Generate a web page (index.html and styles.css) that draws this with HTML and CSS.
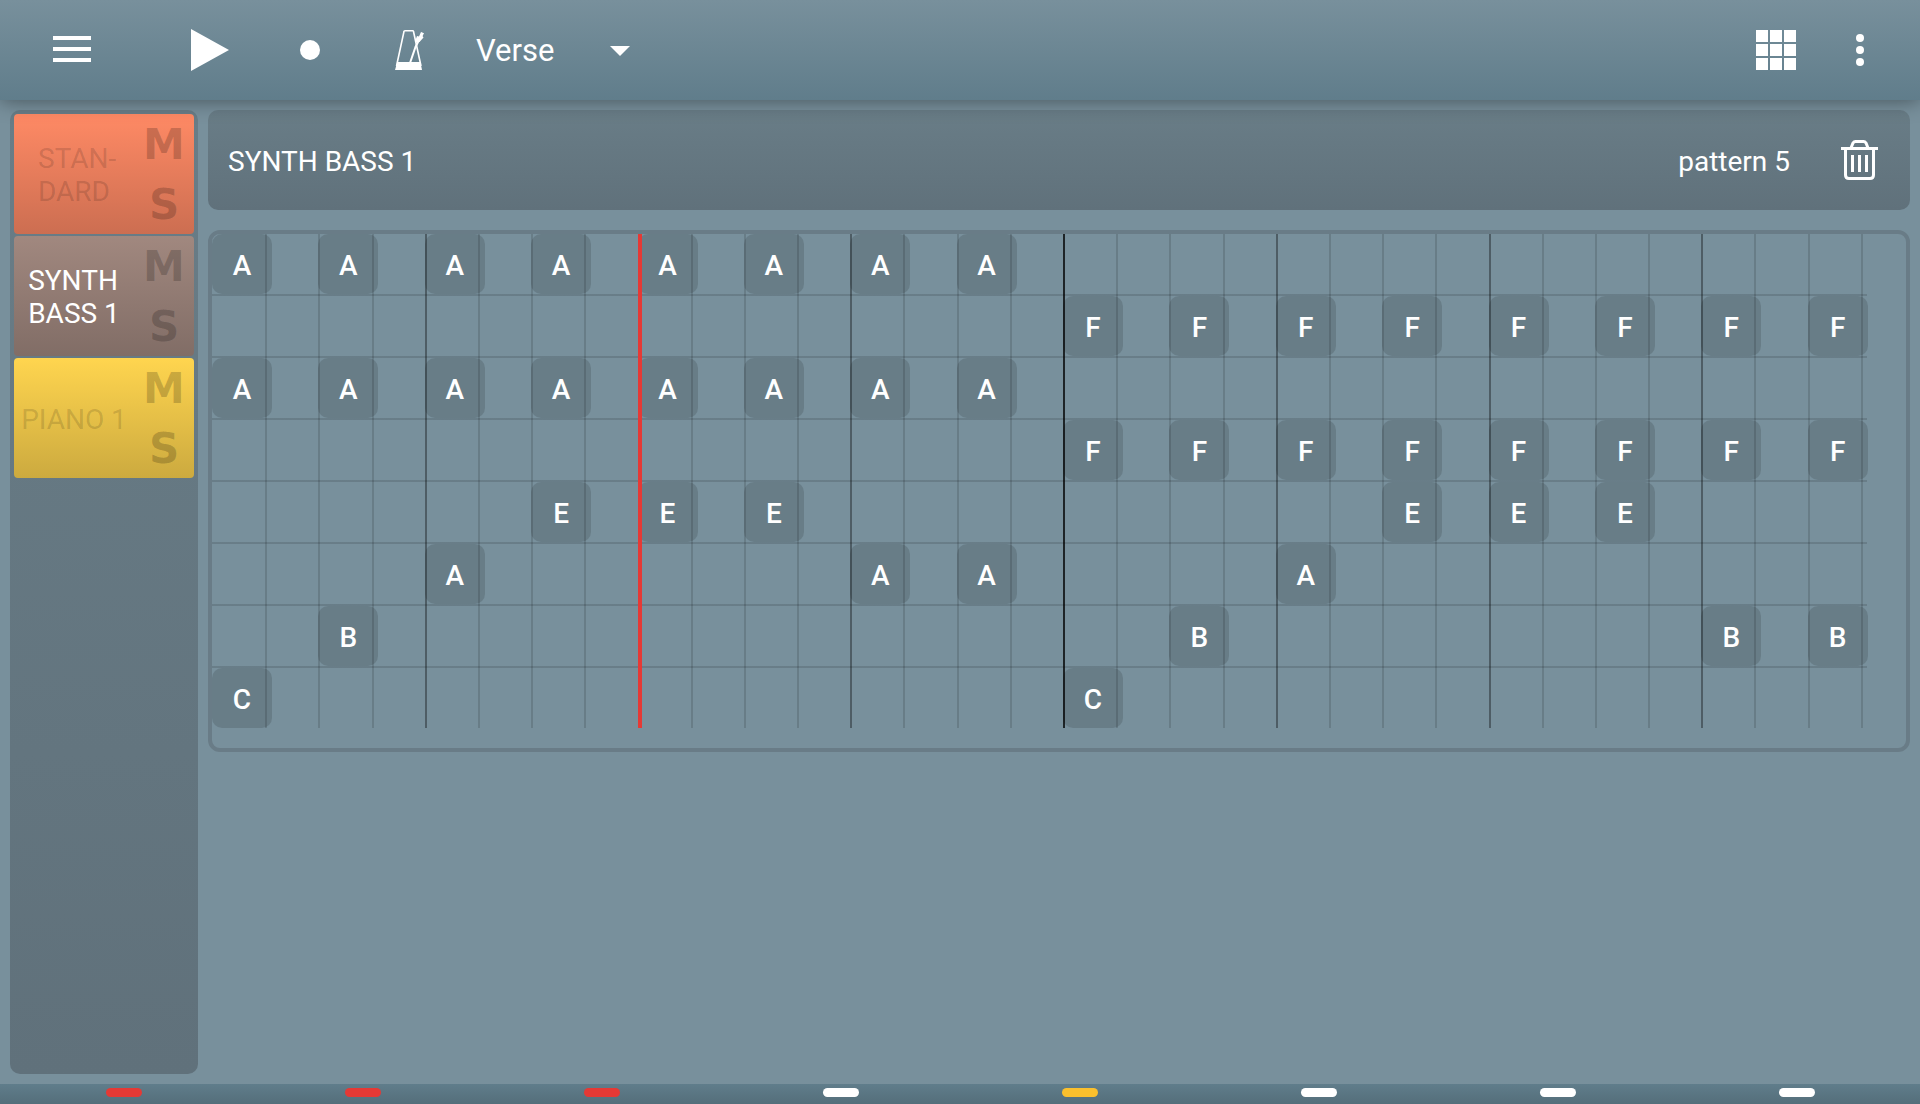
FILE: index.html
```html
<!DOCTYPE html>
<html lang="en">
<head>
<meta charset="utf-8">
<meta name="viewport" content="width=device-width, initial-scale=1">
<title>Song editor</title>
<link rel="stylesheet" href="styles.css">
</head>
<body>
<header class="toolbar">
  <button class="tool tool-menu" type="button" aria-label="Menu">
    <svg width="38" height="28" viewBox="0 0 38 28"><path d="M0 0h38v4H0zM0 11h38v4H0zM0 22h38v4H0z"/></svg>
  </button>
  <button class="tool" type="button" aria-label="Play">
    <svg width="38" height="42" viewBox="0 0 38 42"><path d="M0 0l38 21L0 42z"/></svg>
  </button>
  <button class="tool" type="button" aria-label="Record">
    <svg width="20" height="20" viewBox="0 0 20 20"><circle cx="10" cy="10" r="10"/></svg>
  </button>
  <button class="tool" type="button" aria-label="Metronome">
    <svg width="30" height="40" viewBox="0 0 30 40"><path class="line thin" d="M1.500 36L9 1.500Q9 .8 10 .8H17.500Q18.400 .8 18.500 1.500L26 36"/><path d="M2.300 32H25.400L27 40H0z"/><path class="line" stroke-width="2" d="M15 33L20.500 17L27.500 3"/><path d="M26 2L29 3.200L27.500 6L28.500 7.500L24.500 12L21 12.500L20.500 10L22 6L24 6.500z"/></svg>
  </button>
  <div class="part">
    <select class="part-select" aria-label="Song part">
      <option>Verse</option>
    </select>
    <svg class="part-arrow" width="20" height="10" viewBox="0 0 20 10"><path d="M0 0h20L10 10z"/></svg>
  </div>
  <div class="toolbar-end">
    <button class="tool tool-grid" type="button" aria-label="Patterns">
      <svg width="40" height="40" viewBox="0 0 40 40"><path d="M0 0h12v12H0zM14 0h12v12H14zM28 0h12v12H28zM0 14h12v12H0zM14 14h12v12H14zM28 14h12v12H28zM0 28h12v12H0zM14 28h12v12H14zM28 28h12v12H28z"/></svg>
    </button>
    <button class="tool tool-more" type="button" aria-label="More options">
      <svg width="8" height="32" viewBox="0 0 8 32"><circle cx="4" cy="4" r="4"/><circle cx="4" cy="16" r="4"/><circle cx="4" cy="28" r="4"/></svg>
    </button>
  </div>
</header>

<main class="workspace">
  <nav class="tracks" aria-label="Tracks">
    <div class="track track-orange">
      <button class="track-name" type="button"><span>STAN<span class="hyphen">-</span><br>DARD</span></button>
      <div class="track-switches">
        <button type="button" aria-label="Mute">M</button>
        <button type="button" aria-label="Solo">S</button>
      </div>
    </div>
    <div class="track track-brown">
      <button class="track-name selected" type="button"><span>SYNTH<br>BASS 1</span></button>
      <div class="track-switches">
        <button type="button" aria-label="Mute">M</button>
        <button type="button" aria-label="Solo">S</button>
      </div>
    </div>
    <div class="track track-yellow">
      <button class="track-name" type="button"><span>PIANO 1</span></button>
      <div class="track-switches">
        <button type="button" aria-label="Mute">M</button>
        <button type="button" aria-label="Solo">S</button>
      </div>
    </div>
  </nav>

  <section class="editor">
    <div class="pattern-bar">
      <h1>SYNTH BASS 1</h1>
      <span class="pattern-name">pattern 5</span>
      <button class="tool" type="button" aria-label="Delete pattern">
        <svg width="38" height="40" viewBox="0 0 38 40"><path class="line" stroke-width="3" d="M0 8.500h37M10 8l2-5q1-1.500 2.500-1.500h8q1.500 0 2.500 1.500l2 5M4.500 9v26q0 3.500 3.500 3.500h21q3.500 0 3.500-3.500V9M11.500 15v17M18.500 15v17M25.500 15v17"/></svg>
      </button>
    </div>

    <div class="roll-frame">
      <div class="roll">
        <div class="lane">
          <button class="note">A</button><button class="note">A</button><button class="note">A</button><button class="note">A</button><button class="note">A</button><button class="note">A</button><button class="note">A</button><button class="note">A</button>
        </div>
        <div class="lane">
          <button class="note at-9">F</button><button class="note">F</button><button class="note">F</button><button class="note">F</button><button class="note">F</button><button class="note">F</button><button class="note">F</button><button class="note">F</button>
        </div>
        <div class="lane">
          <button class="note">A</button><button class="note">A</button><button class="note">A</button><button class="note">A</button><button class="note">A</button><button class="note">A</button><button class="note">A</button><button class="note">A</button>
        </div>
        <div class="lane">
          <button class="note at-9">F</button><button class="note">F</button><button class="note">F</button><button class="note">F</button><button class="note">F</button><button class="note">F</button><button class="note">F</button><button class="note">F</button>
        </div>
        <div class="lane">
          <button class="note at-4">E</button><button class="note">E</button><button class="note">E</button><button class="note at-12">E</button><button class="note">E</button><button class="note">E</button>
        </div>
        <div class="lane">
          <button class="note at-3">A</button><button class="note at-7">A</button><button class="note">A</button><button class="note at-11">A</button>
        </div>
        <div class="lane">
          <button class="note at-2">B</button><button class="note at-10">B</button><button class="note at-15">B</button><button class="note">B</button>
        </div>
        <div class="lane">
          <button class="note">C</button><button class="note at-9">C</button>
        </div>
        <div class="steps" aria-hidden="true">
          <i></i><i></i><i></i><i></i><i></i><i></i><i></i><i></i>
          <i class="playhead"></i><i></i><i></i><i></i><i></i><i></i><i></i><i></i>
          <i></i><i></i><i></i><i></i><i></i><i></i><i></i><i></i>
          <i></i><i></i><i></i><i></i><i></i><i></i><i></i><i></i>
        </div>
      </div>
    </div>
  </section>
</main>

<footer class="beats">
  <span class="beat red"></span><span class="beat red"></span><span class="beat red"></span><span class="beat"></span><span class="beat amber"></span><span class="beat"></span><span class="beat"></span><span class="beat"></span>
</footer>
</body>
</html>
```
FILE: styles.css
```css
* {
  box-sizing: border-box;
}

body {
  margin: 0;
  min-height: 100vh;
  display: flex;
  flex-direction: column;
  background: #78909c;
  color: #fff;
  font: 28px/33px Roboto, sans-serif;
}

button {
  margin: 0;
  padding: 0;
  border: 0;
  background: none;
  color: inherit;
  font: inherit;
  cursor: pointer;
}

svg {
  display: block;
  fill: #fff;
}

.line {
  fill: none;
  stroke: #fff;
}

.thin {
  stroke-width: 1.6;
}

/* Top bar */
.toolbar {
  position: relative;
  display: flex;
  align-items: center;
  height: 100px;
  padding: 0 20px;
  background: linear-gradient(#78909c, #607d8b);
  box-shadow: 0 0 20px rgba(0, 0, 0, 0.45);
}

.tool {
  display: flex;
  align-items: center;
  justify-content: center;
  width: 100px;
  height: 100px;
}

.tool-menu {
  width: 104px;
  margin-right: 36px;
}

.part {
  display: grid;
  align-items: center;
  width: 154px;
  margin-left: 16px;
}

.part-select {
  grid-area: 1 / 1;
  height: 60px;
  margin: 0;
  padding: 2px 0 0;
  border: 0;
  appearance: none;
  background: none;
  color: #fff;
  font: 31px/38px Roboto, sans-serif;
}

.part-arrow {
  grid-area: 1 / 1;
  justify-self: end;
  margin-top: 2px;
  pointer-events: none;
}

.toolbar-end {
  display: flex;
  margin-left: auto;
}

.tool-grid {
  width: 88px;
}

.tool-more {
  width: 80px;
}

/* Body */
.workspace {
  flex: 1;
  display: flex;
  gap: 10px;
  padding: 10px;
}

.tracks {
  flex: none;
  display: flex;
  flex-direction: column;
  gap: 2px;
  width: 188px;
  padding: 4px;
  border-radius: 10px;
  background: linear-gradient(#697d87, #60717b);
}

.track {
  display: flex;
  height: 120px;
  border-radius: 4px;
}

.track-orange {
  background: linear-gradient(#ff8a65, #cc6e51);
}

.track-brown {
  background: linear-gradient(#a1887f, #816d66);
}

.track-yellow {
  background: linear-gradient(#ffd54f, #ccaa3f);
}

.track-name {
  display: flex;
  align-items: center;
  justify-content: center;
  width: 120px;
  padding-top: 2px;
  color: rgba(0, 0, 0, 0.15);
  text-align: left;
}

.track-name.selected {
  color: #fff;
}

/* The hyphen hangs outside the centred name */
.hyphen {
  margin-right: -10px;
}

.track-switches {
  display: flex;
  flex-direction: column;
  width: 60px;
  padding-top: 1px;
  color: rgba(0, 0, 0, 0.2);
  font: bold 42px/60px "DejaVu Sans", sans-serif;
}

.editor {
  flex: 1;
  min-width: 0;
  display: flex;
  flex-direction: column;
  gap: 20px;
}

.pattern-bar {
  display: flex;
  align-items: center;
  height: 100px;
  padding-left: 20px;
  border-radius: 10px;
  background: linear-gradient(#697d87, #60717b);
}

.pattern-bar h1 {
  flex: 1;
  margin: 0;
  padding-top: 2px;
  font: inherit;
}

.pattern-name {
  margin-right: 20px;
  padding-top: 2px;
}

/* Piano roll */
.roll-frame {
  padding-bottom: 20px;
  border: 4px solid #697c87;
  border-radius: 12px;
}

.roll {
  display: grid;
  grid-template-columns: minmax(0, 1fr);
  grid-template-rows: repeat(8, 60px);
  gap: 2px;
  margin-right: -8px;
}

.lane {
  display: grid;
  grid-column: 1;
  grid-template-columns: repeat(16, minmax(0, 1fr));
}

/* Divider in the gap under each lane but the last */
.lane:not(:nth-child(8)) {
  margin-bottom: -2px;
  background: linear-gradient(rgba(0, 0, 0, 0.13), rgba(0, 0, 0, 0.13)) no-repeat 0 100% / calc(100% - 47px) 2px;
}

.lane:nth-child(1) { grid-row: 1; }
.lane:nth-child(2) { grid-row: 2; }
.lane:nth-child(3) { grid-row: 3; }
.lane:nth-child(4) { grid-row: 4; }
.lane:nth-child(5) { grid-row: 5; }
.lane:nth-child(6) { grid-row: 6; }
.lane:nth-child(7) { grid-row: 7; }
.lane:nth-child(8) { grid-row: 8; }

.note {
  width: 60px;
  height: 60px;
  padding-top: 2px;
  border-radius: 10px;
  background: rgba(0, 0, 0, 0.13);
  font-weight: 500;
}

.at-2 { grid-column-start: 2; }
.at-3 { grid-column-start: 3; }
.at-4 { grid-column-start: 4; }
.at-7 { grid-column-start: 7; }
.at-9 { grid-column-start: 9; }
.at-10 { grid-column-start: 10; }
.at-11 { grid-column-start: 11; }
.at-12 { grid-column-start: 12; }
.at-15 { grid-column-start: 15; }

.steps {
  display: grid;
  grid-area: 1 / 1 / 9 / 2;
  grid-template-columns: repeat(32, minmax(0, 1fr));
  pointer-events: none;
}

.steps i {
  width: 2px;
  background: rgba(0, 0, 0, 0.13);
}

.steps i:nth-child(4n + 1) {
  background: rgba(0, 0, 0, 0.35);
}

.steps i:nth-child(17) {
  background: rgba(0, 0, 0, 0.75);
}

.steps i:first-child {
  background: none;
}

.steps i.playhead {
  width: 4px;
  background: #e53935;
}

/* Beat indicator */
.beats {
  display: grid;
  grid-template-columns: repeat(8, 1fr);
  justify-items: center;
  height: 20px;
  padding: 4px 4px 0;
  background: linear-gradient(#607d8b, #546e7a);
}

.beat {
  width: 36px;
  height: 9px;
  border-radius: 5px;
  background: #fff;
}

.beat.red {
  background: #e53935;
}

.beat.amber {
  background: #fbc02d;
}
```
